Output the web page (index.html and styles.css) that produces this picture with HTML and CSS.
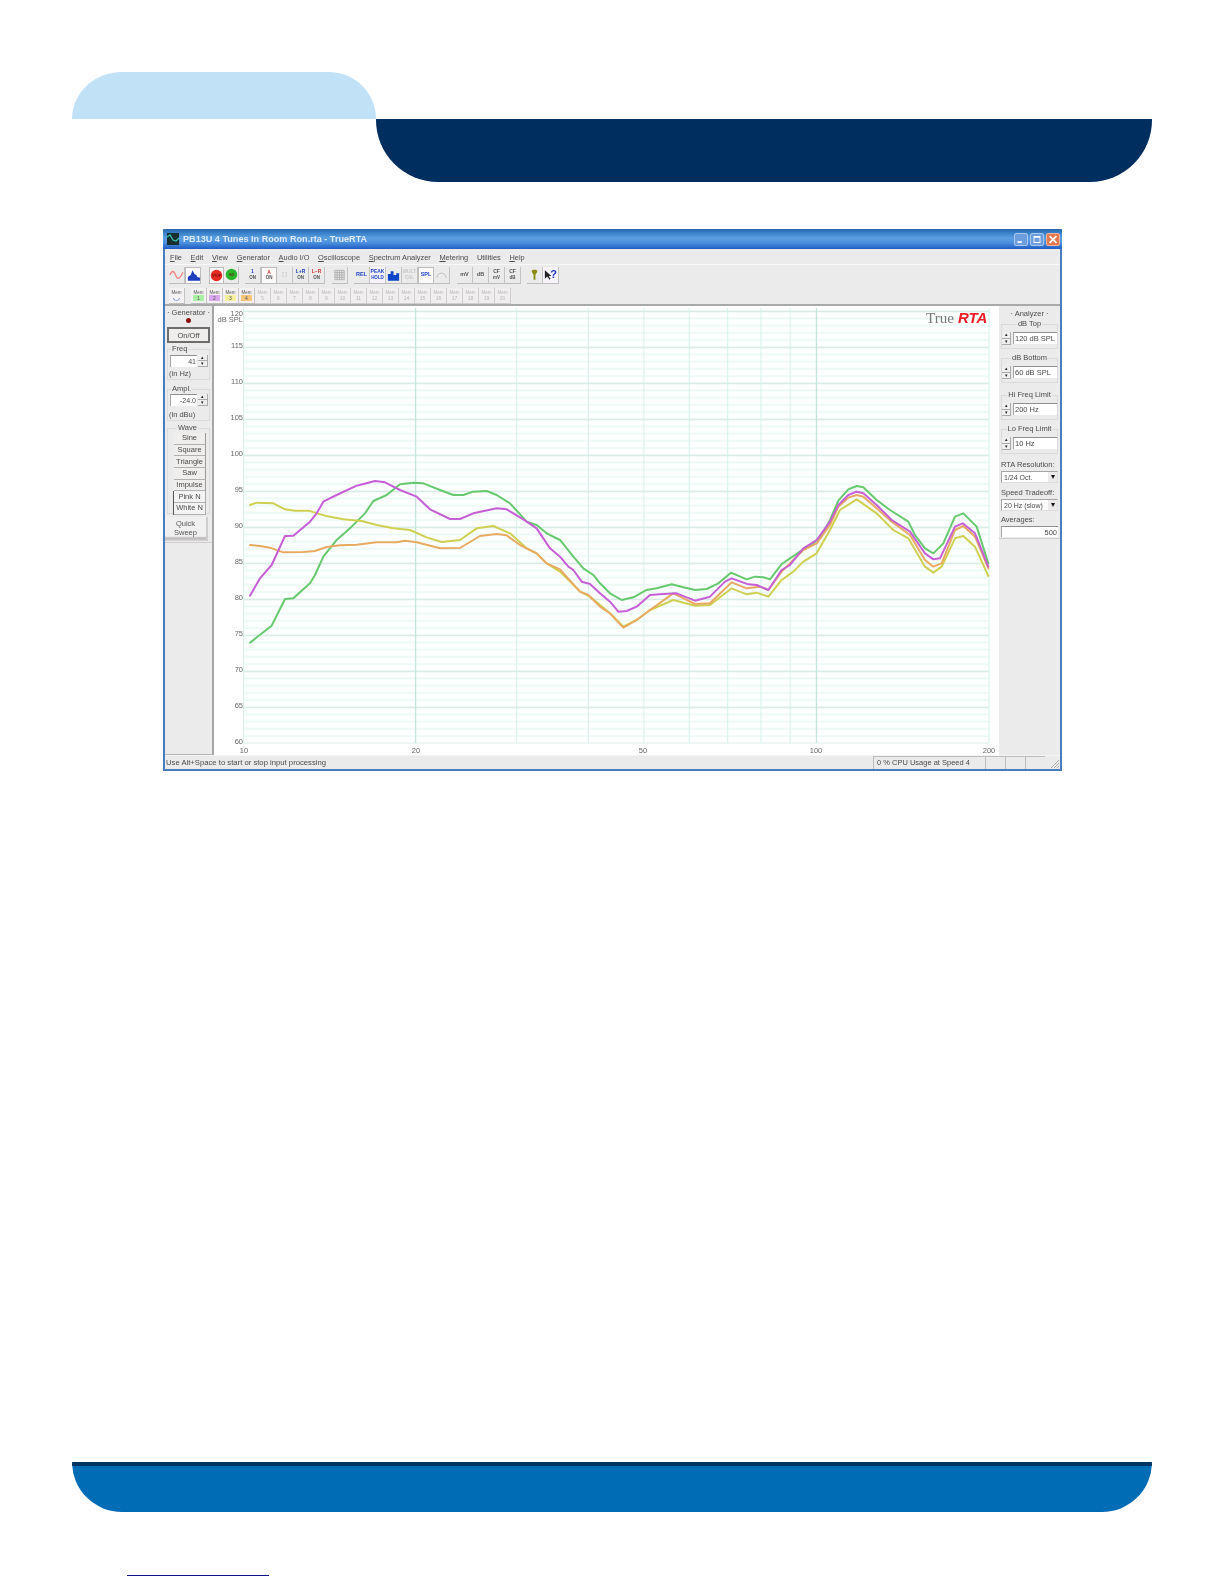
FILE: index.html
```html
<!DOCTYPE html>
<html lang="en">
<head>
<meta charset="utf-8">
<title>TrueRTA</title>
<link rel="stylesheet" href="styles.css">
</head>
<body>
<div class="page">
  <header class="header">
    <div class="tab"></div>
    <div class="banner"></div>
  </header>

  <main class="window">
    <div class="titlebar">
      <svg class="app-icon" viewBox="0 0 12 12"><rect width="12" height="12" fill="#17302f"/><path d="M0 4 3 2 6 7 9 8 12 5" fill="none" stroke="#35c2b0" stroke-width="1.3"/></svg>
      <span class="title-text">PB13U 4 Tunes In Room Ron.rta - TrueRTA</span>
      <span class="win-btn"><svg viewBox="0 0 14 12"><rect x="3" y="8" width="5" height="2" fill="#fff"/></svg></span>
      <span class="win-btn"><svg viewBox="0 0 14 12"><path d="M3 2h8v8H3zM4 4v5h6V4z" fill="#fff" fill-rule="evenodd"/></svg></span>
      <span class="win-btn win-close"><svg viewBox="0 0 14 12"><path d="M3 2 11 10M11 2 3 10" stroke="#fff" stroke-width="2"/></svg></span>
    </div>

    <nav class="menubar">
      <span><u>F</u>ile</span><span><u>E</u>dit</span><span><u>V</u>iew</span><span><u>G</u>enerator</span><span><u>A</u>udio I/O</span><span><u>O</u>scilloscope</span><span><u>S</u>pectrum Analyzer</span><span><u>M</u>etering</span><span>Utilities</span><span><u>H</u>elp</span>
    </nav>

    <div class="toolbar toolbar-top">
      <div class="tb-group">
        <span class="tb"><svg viewBox="0 0 16 14"><path d="M1 7C3 2 5 2 7 7S11 12 15 4" fill="none" stroke="#ee8580" stroke-width="1.400"/></svg></span>
        <span class="tb tb-on"><svg viewBox="0 0 16 14"><path d="M2 13V9L5 7 7 2 9 6 11 7 12 9 15 10V13Z" fill="#1f3fc0"/></svg></span>
      </div>
      <div class="tb-group gap-l">
        <span class="tb tb-round tb-on"><svg viewBox="0 0 14 14"><circle cx="7" cy="7" r="6.200" fill="#e52a22"/><text class="lamp-text" x="7" y="8.500">STOP</text></svg></span>
        <span class="tb tb-round"><svg viewBox="0 0 14 14"><circle cx="7" cy="7" r="6.200" fill="#29b52c"/><text class="lamp-text" x="7" y="8.500">GO</text></svg></span>
      </div>
      <div class="tb-group gap-s">
        <span class="tb tb-stack"><b class="c-blue">1</b><i>ON</i></span>
        <span class="tb tb-stack tb-on"><b class="c-red">A</b><i>ON</i></span>
        <span class="tb tb-stack tb-off"><b>[ ]</b></span>
        <span class="tb tb-stack"><b class="c-blue">L+R</b><i>ON</i></span>
        <span class="tb tb-stack"><b class="c-red">L−R</b><i>ON</i></span>
      </div>
      <div class="tb-group gap-m">
        <span class="tb"><svg viewBox="0 0 16 14"><path d="M3 2H13V12H3ZM3 4.500H13M3 7H13M3 9.500H13M5.500 2V12M8 2V12M10.500 2V12" fill="none" stroke="#9a9a9a" stroke-width=".7"/></svg></span>
      </div>
      <div class="tb-group gap-s">
        <span class="tb tb-word c-blue">REL</span>
        <span class="tb tb-stack tb-tint"><b class="c-blue">PEAK</b><i class="c-blue">HOLD</i></span>
        <span class="tb"><svg viewBox="0 0 16 14"><path d="M2 13V6H5V3H8V7H11V5H14V13Z" fill="#0d44c8"/></svg></span>
        <span class="tb tb-stack tb-off"><b>MULT</b><i>CAL</i></span>
        <span class="tb tb-word tb-on c-blue">SPL</span>
        <span class="tb tb-off"><svg viewBox="0 0 16 14"><path d="M3 10A5 5 0 0 1 13 10" fill="none" stroke="#bbb"/></svg></span>
      </div>
      <div class="tb-group gap-m">
        <span class="tb tb-word">mV</span>
        <span class="tb tb-word">dB</span>
        <span class="tb tb-stack"><b>CF</b><i>mV</i></span>
        <span class="tb tb-stack"><b>CF</b><i>dB</i></span>
      </div>
      <div class="tb-group gap-s">
        <span class="tb"><svg viewBox="0 0 16 14"><path d="M5 3C5 1 11 1 11 3 11 5 9 5 9 7V12H7V7C7 5 5 5 5 3Z" fill="#8a8a10"/></svg></span>
        <span class="tb tb-tint"><svg viewBox="0 0 16 14"><path d="M2 2V11L4.500 8.500 7 12 8 11 6 8H9Z" fill="#222"/></svg><em class="help-mark">?</em></span>
      </div>
    </div>

    <div class="toolbar toolbar-mem">
      <span class="tb tb-mem"><i>Mem</i><b class="chip-blue">◡</b></span>
      <div class="tb-group gap-mem">
        <span class="tb tb-mem"><i>Mem</i><b class="chip-1">1</b></span>
        <span class="tb tb-mem"><i>Mem</i><b class="chip-2">2</b></span>
        <span class="tb tb-mem"><i>Mem</i><b class="chip-3">3</b></span>
        <span class="tb tb-mem"><i>Mem</i><b class="chip-4">4</b></span>
        <span class="tb tb-mem tb-off"><i>Mem</i><b>5</b></span>
        <span class="tb tb-mem tb-off"><i>Mem</i><b>6</b></span>
        <span class="tb tb-mem tb-off"><i>Mem</i><b>7</b></span>
        <span class="tb tb-mem tb-off"><i>Mem</i><b>8</b></span>
        <span class="tb tb-mem tb-off"><i>Mem</i><b>9</b></span>
        <span class="tb tb-mem tb-off"><i>Mem</i><b>10</b></span>
        <span class="tb tb-mem tb-off"><i>Mem</i><b>11</b></span>
        <span class="tb tb-mem tb-off"><i>Mem</i><b>12</b></span>
        <span class="tb tb-mem tb-off"><i>Mem</i><b>13</b></span>
        <span class="tb tb-mem tb-off"><i>Mem</i><b>14</b></span>
        <span class="tb tb-mem tb-off"><i>Mem</i><b>15</b></span>
        <span class="tb tb-mem tb-off"><i>Mem</i><b>16</b></span>
        <span class="tb tb-mem tb-off"><i>Mem</i><b>17</b></span>
        <span class="tb tb-mem tb-off"><i>Mem</i><b>18</b></span>
        <span class="tb tb-mem tb-off"><i>Mem</i><b>19</b></span>
        <span class="tb tb-mem tb-off"><i>Mem</i><b>20</b></span>
      </div>
    </div>

    <div class="workspace">
      <aside class="left-panel">
        <div class="panel-title">· Generator ·</div>
        <div class="led"></div>
        <button class="onoff">On/Off</button>
        <fieldset class="fs fs-freq">
          <legend>Freq</legend>
          <div class="spin-field">
            <span class="input input-right input-gen">41</span>
            <span class="spin"><i>▴</i><i>▾</i></span>
          </div>
          <div class="unit">(in Hz)</div>
        </fieldset>
        <fieldset class="fs fs-ampl">
          <legend>Ampl.</legend>
          <div class="spin-field">
            <span class="input input-right input-gen">-24.0</span>
            <span class="spin"><i>▴</i><i>▾</i></span>
          </div>
          <div class="unit unit-ampl">(in dBu)</div>
        </fieldset>
        <fieldset class="fs fs-wave">
          <legend>Wave</legend>
          <button class="wave-btn">Sine</button>
          <button class="wave-btn">Square</button>
          <button class="wave-btn">Triangle</button>
          <button class="wave-btn">Saw</button>
          <button class="wave-btn">Impulse</button>
          <div class="noise-box">
            <button class="wave-btn wave-flat">Pink N</button>
            <button class="wave-btn wave-flat">White N</button>
          </div>
        </fieldset>
        <button class="quick">Quick<br>Sweep</button>
        <div class="panel-rule"></div>
      </aside>

      <section class="chart">
        <svg class="chart-svg" viewBox="214 306 785 449" aria-label="dB SPL against frequency">
          <defs>
            <pattern id="hgrid" patternUnits="userSpaceOnUse" x="243" y="310.700" width="746" height="36">
              <rect y="0" width="746" height="1.300" fill="#d0e6e1"/>
              <rect y="7.200" width="746" height="1" fill="#e0f5f0"/>
              <rect y="14.400" width="746" height="1" fill="#e0f5f0"/>
              <rect y="21.600" width="746" height="1" fill="#e0f5f0"/>
              <rect y="28.800" width="746" height="1" fill="#e0f5f0"/>
            </pattern>
          </defs>
          <rect x="243" y="308" width="746" height="435.500" fill="#fcfffe"/>
          <rect x="243" y="308" width="746" height="435.500" fill="url(#hgrid)"/>
          <g class="vgrid">
            <path d="M243.500 308V743M516.600 308V743M588.300 308V743M643.900 308V743M689.300 308V743M727.700 308V743M761 308V743M790.200 308V743M989 308V743"/>
            <path class="vgrid-major" d="M415.600 308V743M816.500 308V743"/>
          </g>
          <g class="curves" transform="translate(240 450) scale(.33333)">
            <polyline class="c-green" points="30,578 95,527 135,447 160,445 210,400 225,375 250,320 290,270 335,230 375,190 400,153 440,135 480,103 520,98 550,100 600,120 640,135 670,135 700,125 740,123 770,135 810,160 860,215 890,225 920,250 960,270 1000,320 1030,355 1060,375 1080,400 1110,430 1145,450 1180,442 1220,420 1250,415 1295,403 1330,412 1365,420 1400,417 1435,400 1473,368 1520,388 1545,380 1570,382 1590,388 1625,342 1680,305 1720,280 1745,258 1770,210 1795,152 1825,118 1850,108 1870,112 1910,150 1950,180 2005,215 2025,255 2055,295 2080,310 2110,280 2145,200 2170,190 2210,230 2245,340"/>
            <polyline class="c-yellow" points="30,165 50,158 100,160 135,178 165,182 205,182 255,197 310,208 365,213 410,225 460,235 510,240 560,262 605,276 660,270 710,235 760,228 810,250 860,295 890,310 920,340 960,365 1020,425 1050,440 1080,465 1110,490 1150,530 1190,510 1230,480 1300,450 1365,467 1410,465 1475,415 1520,433 1550,428 1585,440 1625,390 1660,365 1690,335 1730,310 1770,240 1800,180 1850,148 1910,190 1960,240 2005,265 2055,350 2080,368 2105,350 2145,265 2170,258 2205,290 2245,378"/>
            <polyline class="c-orange" points="30,285 60,288 90,293 130,307 190,306 225,303 260,291 300,286 350,284 410,277 470,277 495,272 530,277 600,295 660,294 720,258 770,252 800,256 840,285 890,310 920,340 960,358 1020,425 1045,435 1080,470 1110,490 1150,533 1190,510 1230,480 1300,430 1365,462 1410,460 1475,397 1520,415 1560,410 1585,420 1625,365 1690,300 1730,280 1770,225 1795,170 1825,143 1850,135 1870,140 1910,175 1955,215 2010,255 2055,330 2080,350 2105,340 2145,240 2170,228 2205,260 2245,355"/>
            <polyline class="c-magenta" points="30,437 60,385 95,345 135,258 160,257 210,215 230,190 250,155 290,135 350,107 405,93 435,97 480,120 530,140 570,178 630,207 660,207 700,190 770,175 800,178 850,208 890,235 930,295 960,320 985,350 1000,360 1025,395 1050,402 1080,430 1110,455 1135,485 1160,483 1190,470 1230,435 1270,432 1310,430 1365,452 1410,440 1455,395 1475,385 1525,403 1550,405 1585,420 1625,360 1650,345 1690,295 1730,270 1770,215 1795,165 1825,135 1850,125 1870,130 1910,165 1955,210 2010,245 2055,310 2080,328 2100,325 2145,230 2168,220 2205,250 2245,350"/>
          </g>
          <g class="axis axis-y">
            <text x="243" y="316">120</text><text x="243" y="348">115</text><text x="243" y="384">110</text><text x="243" y="420">105</text><text x="243" y="456">100</text><text x="243" y="492">95</text><text x="243" y="528">90</text><text x="243" y="564">85</text><text x="243" y="600">80</text><text x="243" y="636">75</text><text x="243" y="672">70</text><text x="243" y="708">65</text><text x="243" y="744">60</text>
            <text x="243" y="322">dB SPL</text>
          </g>
          <g class="axis axis-x">
            <text x="244" y="753">10</text><text x="416" y="753">20</text><text x="643" y="753">50</text><text x="816" y="753">100</text><text x="989" y="753">200</text>
          </g>
          <text class="logo-true" x="926" y="323">True</text>
          <text class="logo-rta" x="958" y="323">RTA</text>
        </svg>
      </section>

      <aside class="right-panel">
        <div class="panel-title">· Analyzer ·</div>
        <fieldset class="fs fs-an fs-top"><legend>dB Top</legend>
          <div class="an-row"><span class="spin spin-an"><i>▴</i><i>▾</i></span><span class="input">120 dB SPL</span></div>
        </fieldset>
        <fieldset class="fs fs-an"><legend>dB Bottom</legend>
          <div class="an-row"><span class="spin spin-an"><i>▴</i><i>▾</i></span><span class="input">60 dB SPL</span></div>
        </fieldset>
        <fieldset class="fs fs-an fs-hi"><legend>Hi Freq Limit</legend>
          <div class="an-row"><span class="spin spin-an"><i>▴</i><i>▾</i></span><span class="input">200 Hz</span></div>
        </fieldset>
        <fieldset class="fs fs-an"><legend>Lo Freq Limit</legend>
          <div class="an-row"><span class="spin spin-an"><i>▴</i><i>▾</i></span><span class="input">10 Hz</span></div>
        </fieldset>
        <div class="field-label label-first">RTA Resolution:</div>
        <div class="combo"><span>1/24 Oct.</span><i>▾</i></div>
        <div class="field-label">Speed Tradeoff:</div>
        <div class="combo"><span>20 Hz (slow)</span><i>▾</i></div>
        <div class="field-label label-last">Averages:</div>
        <div class="input input-right input-avg">500</div>
        <div class="panel-rule"></div>
      </aside>
    </div>

    <footer class="statusbar">
      <span class="st-main">Use Alt+Space to start or stop input processing</span>
      <span class="st-pane st-cpu">0 % CPU Usage at Speed 4</span>
      <span class="st-pane st-empty"></span>
      <span class="st-pane st-empty"></span>
      <span class="st-pane st-empty"></span>
      <svg class="grip" viewBox="0 0 12 12"><path d="M11 3 3 11M11 6 6 11M11 9 9 11" stroke="#aaa"/></svg>
    </footer>
  </main>

  <div class="footer-band"></div>
  <div class="footer-link"></div>
</div>
</body>
</html>
```
FILE: styles.css
```css
* { box-sizing: border-box; }
html, body { margin: 0; padding: 0; background: #fff; }
.page {
  width: 1224px; height: 1584px;
  padding-top: 72px;
  display: flex; flex-direction: column;
  overflow: hidden;
  font-family: "Liberation Sans", Arial, sans-serif;
}

/* page header */
.header { display: flex; flex-direction: column; }
.tab {
  width: 304px; height: 47px; margin-left: 72px;
  background: #c0e1f6;
  border-radius: 50px 47px 0 0 / 47px 47px 0 0;
}
.banner {
  width: 776px; height: 63px; margin-left: 376px;
  background: #002f5f;
  border-radius: 0 0 62px 62px;
}

/* application window */
.window {
  width: 899px; height: 542px;
  margin: 47px 0 0 163px;
  display: flex; flex-direction: column;
  border: solid #4a7cc0; border-width: 0 2px 2px;
  background: #ecebec;
  color: #4a4a4a;
  font-size: 7.500px;
  filter: blur(.6px);
}
.titlebar {
  height: 20px; margin: 0 -2px; padding: 0 2px 0 4px;
  flex: none;
  display: flex; align-items: center; gap: 2px;
  border-radius: 3px 3px 0 0;
  background: linear-gradient(#25659f 0, #2f77c0 12%, #5a9fe2 45%, #4a8ede 70%, #1f5cc4 100%);
}
.app-icon { width: 12px; height: 12px; margin-right: 2px; }
.title-text { flex: 1; color: #dfeafa; font-size: 9.100px; font-weight: 700; }
.win-btn {
  width: 14px; height: 13px; display: flex;
  background: #6c9ddc; border: 1px solid #a9c8ec; border-radius: 2px;
}
.win-btn svg { width: 100%; height: 100%; }
.win-close { background: #e2784f; border-color: #efb49b; }

.menubar {
  height: 15px; flex: none; padding: 1px 0 0 5px;
  display: flex; align-items: center; gap: 8.700px;
  font-size: 7.400px; color: #4a4a4a;
}

.toolbar { flex: none; display: flex; align-items: center; padding-left: 4px; }
.toolbar-top { height: 21px; border-top: 1px solid #f8f7f7; }
.toolbar-mem { height: 21px; padding-top: 2px; border-bottom: 2px solid #a9a9a9; }
.tb-group { display: flex; align-items: center; }
.gap-s { margin-left: 6px; }
.gap-m { margin-left: 7px; }
.gap-l { margin-left: 8px; }
.gap-mem { margin-left: 6px; }

.tb {
  position: relative;
  width: 16px; height: 17px; flex: none;
  display: flex; flex-direction: column; align-items: center; justify-content: center;
  border-right: 1px solid #c4c2c2; border-bottom: 1px solid #bdbbbb;
  font-size: 5px; line-height: 5.500px; color: #555;
}
.tb svg { width: 15px; height: 14px; }
.tb-round { width: 15px; }
.tb-round svg { width: 13px; height: 13px; }
.lamp-text { font: 700 3.500px "Liberation Sans", sans-serif; text-anchor: middle; fill: #701010; }
.tb-on { background: #fbfaf9; border: 1px solid #bcbcbc; }
.tb-tint { background: #f6f4fa; }
.tb-off { color: #c9c7c7; }
.tb-stack b { font-weight: 700; font-size: 5px; }
.tb-stack i { font-style: normal; font-weight: 700; font-size: 4.500px; }
.tb-word { font-size: 5.500px; font-weight: 700; }
.c-blue { color: #1b3fc4; }
.c-red { color: #d03030; }
.help-mark {
  position: absolute; right: 1px; top: 1px;
  font: 700 11px "Liberation Sans", sans-serif; color: #2233c0;
}

.tb-mem { width: 16px; height: 16px; background: #f3f1f1; }
.tb-mem i { font-style: normal; font-size: 4.500px; line-height: 5px; }
.tb-mem b { font-size: 5px; line-height: 6px; width: 11px; text-align: center; font-weight: 400; }
.tb-mem.tb-off { background: #f0eeee; border-color: #cfcdcd; color: #b9b7b7; }
.tb-mem .chip-blue { color: #2a40d0; background: none; font-size: 8px; }
.chip-1 { background: #a9f0a4; }
.chip-2 { background: #dba6ec; }
.chip-3 { background: #f5f09c; }
.chip-4 { background: #f5c57a; }

/* three-column work area */
.workspace { flex: 1; min-height: 0; display: flex; }
.left-panel {
  width: 49px; flex: none; padding: 2px 2px 0 2px;
  display: flex; flex-direction: column;
  border-right: 2px solid #a6a6a6;
  border-bottom: 1px solid #b5b5b5;
}
.panel-title { height: 10px; line-height: 10px; text-align: center; white-space: nowrap; }
.led {
  width: 5px; height: 5px; margin: 0 auto; flex: none;
  border-radius: 50%; background: #8a1010;
}
.onoff {
  height: 16px; margin-top: 4px; padding: 0; flex: none;
  font: 7.500px "Liberation Sans", sans-serif; color: #4a4a4a;
  background: #efeeed;
  border: 2px solid #6d6d6d;
}
.fs {
  margin: 0; padding: 0; min-width: 0; flex: none;
  border: 1px solid #dbd9d9;
}
.fs legend { padding: 0 1px; margin-left: 3px; height: 10px; line-height: 10px; white-space: nowrap; }
.fs-freq { height: 36px; margin-top: 1px; padding-top: 1px; }
.fs-ampl { height: 37px; margin-top: 4px; }
.fs-wave { height: 91px; margin-top: 2px; padding: 0 0 0 6px; }
.spin-field { display: flex; align-items: center; padding-left: 2px; }
.input {
  display: block; flex: 1; height: 12px; line-height: 11px; padding: 0 1px;
  background: #fff; overflow: hidden; white-space: nowrap;
  border-top: 1px solid #8f8f8f; border-left: 1px solid #a5a5a5;
}
.input-gen { flex: none; width: 27px; font-size: 7px; }
.input-right { text-align: right; }
.spin { width: 10px; height: 12px; flex: none; margin-left: 1px; display: flex; flex-direction: column; }
.spin i {
  flex: 1; font-style: normal; font-size: 5px; line-height: 5px; text-align: center; color: #222;
  background: #f0efef; border-right: 1px solid #aaa; border-bottom: 1px solid #aaa;
}
.unit { height: 10px; line-height: 10px; margin-top: 2px; padding-left: 1px; white-space: nowrap; }
.unit-ampl { margin-top: 4px; }
.wave-btn {
  display: block; width: 32px; height: 11.700px; padding: 0;
  font: 7.500px/10px "Liberation Sans", sans-serif; color: #4a4a4a;
  background: #efeeed; white-space: nowrap;
  border: 0; border-right: 1.500px solid #9a9a9a; border-bottom: 1px solid #b0b0b0;
}
.noise-box { border-left: 1px solid #555; margin-left: -1px; width: 33px; }
.wave-flat { border-right: 1px solid #aaa; background: #f4f3f3; }
.quick {
  height: 24px; width: 43px; margin-top: 3px; margin-left: -2px; padding: 0 0 3px; flex: none;
  font: 7.500px/9px "Liberation Sans", sans-serif; color: #555;
  background: linear-gradient(#f1f0f0 80%, #b9b7b7 88%, #d9d8d8);
  border: 0; border-right: 2px solid #cfcdcd;
}
.panel-rule { height: 1px; margin: 1px -2px 0; background: #cfcdcd; flex: none; }

.chart { width: 785px; flex: none; background: #fff; }
.chart-svg { display: block; width: 785px; height: 449px; }
.vgrid path { fill: none; stroke: #d6f1eb; stroke-width: 1; }
.vgrid .vgrid-major { stroke: #c6e3dd; stroke-width: 1.300; }
.curves polyline { fill: none; stroke-width: 6; stroke-linejoin: round; stroke-linecap: round; }
.c-green { stroke: #66c96e; }
.c-yellow { stroke: #cfd052; }
.c-orange { stroke: #e8aa62; }
.c-magenta { stroke: #c65fd6; }
.axis text { font: 7.500px "Liberation Sans", sans-serif; fill: #666; }
.axis-y text { text-anchor: end; }
.axis-x text { text-anchor: middle; }
.logo-true { font: 15px "Liberation Serif", serif; fill: #7a7a7a; }
.logo-rta { font: italic 700 15px "Liberation Sans", sans-serif; fill: #ee1c25; }

.right-panel {
  flex: 1; min-width: 0; padding: 3px 2px 0;
  display: flex; flex-direction: column;
}
.fs-an { height: 30px; margin-top: 3px; }
.fs-an legend { margin: 0 auto; }
.fs-top { margin-top: 0; }
.fs-an + .fs-an { margin-top: 4px; }
.fs-an + .fs-hi { margin-top: 7px; }
.an-row { display: flex; align-items: stretch; height: 13px; margin-top: 3px; }
.spin-an { height: 13px; width: 9px; margin-left: 0; margin-right: 2px; }
.field-label { height: 9px; line-height: 9px; margin-top: 5px; white-space: nowrap; }
.label-first { margin-top: 6px; }
.label-last { margin-top: 4px; }
.combo {
  height: 12px; flex: none; display: flex; align-items: center; justify-content: space-between;
  background: #fff; padding-left: 2px; margin-top: 2px; white-space: nowrap; font-size: 7px;
  border: 1px solid #a5a5a5; border-right-color: #ddd; border-bottom-color: #ddd;
}
.combo i {
  font-style: normal; font-size: 8px; width: 9px; height: 10px; line-height: 10px; text-align: center;
  background: #eceaea; color: #111;
}
.input-avg { flex: none; height: 11px; margin-top: 2px; }

.statusbar {
  height: 14px; flex: none; display: flex; align-items: center;
  border-top: 1px solid #f5f4f4;
}
.st-main { width: 708px; padding-left: 1px; white-space: nowrap; font-size: 7.700px; }
.st-pane { height: 100%; border-left: 1px solid #bdbbbb; border-top: 1px solid #bdbbbb; white-space: nowrap; }
.st-cpu { width: 112px; padding: 1px 0 0 3px; }
.st-empty { width: 20px; }
.grip { width: 12px; height: 12px; margin-left: auto; }

/* page footer */
.footer-band {
  width: 1080px; height: 50px; margin: 691px 0 0 72px; flex: none;
  background: #006cb5;
  border-top: 4px solid #003461;
  border-radius: 0 0 50px 50px;
}
.footer-link { width: 142px; height: 1px; margin: 63px 0 0 127px; background: #11118a; flex: none; }
```
